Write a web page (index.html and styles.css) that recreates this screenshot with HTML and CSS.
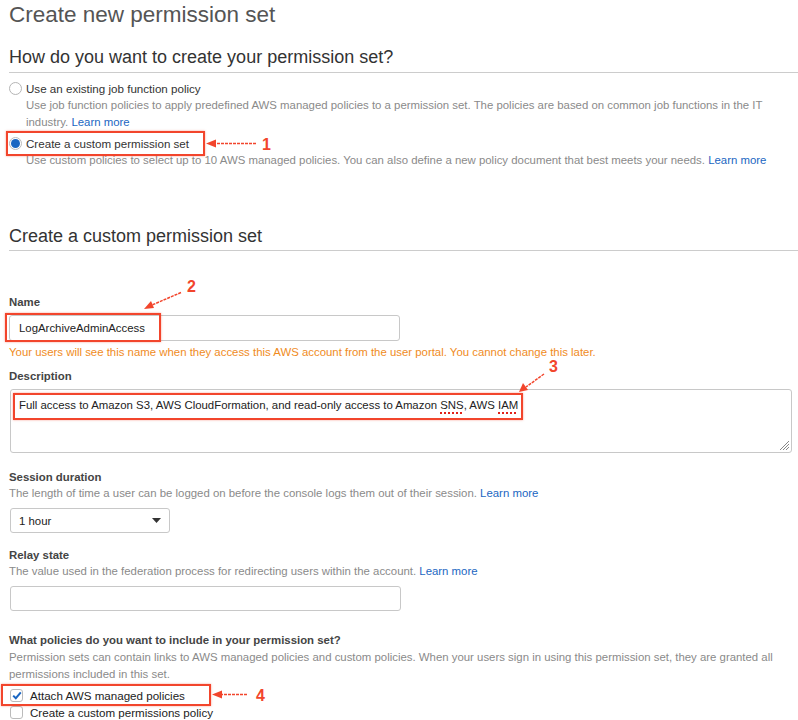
FILE: index.html
```html
<!DOCTYPE html>
<html>
<head>
<meta charset="utf-8">
<link rel="stylesheet" href="styles.css">
</head>
<body>
<div class="page">
  <h1 class="title">Create new permission set</h1>
  <h2 class="section">How do you want to create your permission set?</h2>
  <div class="options">
    <div class="option">
      <div class="opt-row"><span class="radio"></span><span class="opt-label">Use an existing job function policy</span></div>
      <p class="opt-desc">Use job function policies to apply predefined AWS managed policies to a permission set. The policies are based on common job functions in the IT industry. <a class="link">Learn more</a></p>
    </div>
    <div class="option">
      <div class="opt-row"><span class="radio checked"></span><span class="opt-label">Create a custom permission set</span></div>
      <p class="opt-desc">Use custom policies to select up to 10 AWS managed policies. You can also define a new policy document that best meets your needs. <a class="link">Learn more</a></p>
    </div>
  </div>

  <h2 class="section second">Create a custom permission set</h2>

  <div class="field name-field">
    <div class="label">Name</div>
    <div class="input">LogArchiveAdminAccess</div>
    <div class="warn">Your users will see this name when they access this AWS account from the user portal. You cannot change this later.</div>
  </div>

  <div class="field desc-field">
    <div class="label">Description</div>
    <div class="textarea">Full access to Amazon S3, AWS CloudFormation, and read-only access to Amazon <span class="spell">SNS</span>, AWS <span class="spell">IAM</span>
      <svg class="grip" width="12" height="12" viewBox="0 0 12 12"><path d="M11 2L2 11M11 5L5 11M11 8L8 11" stroke="#888" stroke-width="1"/></svg>
    </div>
  </div>

  <div class="field session-field">
    <div class="label">Session duration</div>
    <div class="help">The length of time a user can be logged on before the console logs them out of their session. <a class="link">Learn more</a></div>
    <div class="select"><span>1 hour</span><svg width="9" height="5" viewBox="0 0 9 5"><path d="M0 0H9L4.5 5Z" fill="#333"/></svg></div>
  </div>

  <div class="field relay-field">
    <div class="label">Relay state</div>
    <div class="help">The value used in the federation process for redirecting users within the account. <a class="link">Learn more</a></div>
    <div class="input empty"></div>
  </div>

  <div class="field policies">
    <div class="label">What policies do you want to include in your permission set?</div>
    <div class="help tall">Permission sets can contain links to AWS managed policies and custom policies. When your users sign in using this permission set, they are granted all permissions included in this set.</div>
    <div class="checks">
      <div class="check-row"><span class="checkbox checked"><svg width="10" height="9" viewBox="0 0 10 9"><path d="M1.2 4.6L3.8 7.2L8.8 1.4" stroke="#1a66c2" stroke-width="2" fill="none"/></svg></span><span class="check-label">Attach AWS managed policies</span></div>
      <div class="check-row"><span class="checkbox"></span><span class="check-label">Create a custom permissions policy</span></div>
    </div>
  </div>

  <!-- annotations -->
  <div class="ann-box box1"></div>
  <div class="ann-box box2"></div>
  <div class="ann-box box3"></div>
  <div class="ann-box box4"></div>
  <svg class="ann-svg" width="798" height="720" viewBox="0 0 798 720">
    <g stroke="#f2452c" stroke-width="1.5" fill="none" stroke-dasharray="3 1">
      <path d="M256 143.5H214"/>
      <path d="M181 292.5L152 305"/>
      <path d="M544 374L526 387"/>
      <path d="M247 694.5H220"/>
    </g>
    <g fill="#f2452c">
      <path d="M206 143.5L216 139.5L216 147.5Z"/>
      <path d="M144 309L151 301L154 308Z"/>
      <path d="M519 392L523 383L528 390Z"/>
      <path d="M212 694.5L222 690.5L222 698.5Z"/>
    </g>
    <g fill="#f2452c" font-family="Liberation Sans, Arial, sans-serif" font-weight="bold" font-size="16">
      <text x="262" y="150">1</text>
      <text x="187" y="292">2</text>
      <text x="549" y="372">3</text>
      <text x="256" y="701">4</text>
    </g>
  </svg>
</div>
</body>
</html>
```
FILE: styles.css
```css
html, body {
  margin: 0;
  padding: 0;
  background: #fff;
}
.page {
  position: relative;
  width: 798px;
  height: 720px;
  overflow: hidden;
  padding-left: 9px;
  box-sizing: border-box;
  font-family: "Liberation Sans", Arial, Helvetica, sans-serif;
  font-size: 11.4px;
  color: #333;
}
.title {
  margin: 0;
  font-size: 22.5px;
  line-height: 30px;
  font-weight: normal;
  color: #555;
}
.section {
  margin: 15px 0 0;
  font-size: 18px;
  line-height: 24px;
  padding-bottom: 3px;
  font-weight: normal;
  color: #333;
  border-bottom: 1px solid #ccc;
}
.section.second {
  margin-top: 55px;
  padding-bottom: 2px;
}
.options {
  margin-top: 7px;
  display: flex;
  flex-direction: column;
  gap: 4px;
}
.opt-row {
  display: flex;
  align-items: center;
  height: 17px;
  gap: 4px;
}
.radio {
  width: 11px;
  height: 11px;
  border: 1px solid #b5b5b5;
  border-radius: 50%;
  background: #fff;
}
.radio.checked {
  background: #1a66c2;
  background-clip: content-box;
  width: 9px;
  height: 9px;
  padding: 1px;
  border-color: #bbb;
}
.opt-label {
  font-size: 11.6px;
  color: #333;
}
.opt-desc {
  margin: 0 0 0 17px;
  font-size: 11.4px;
  line-height: 17px;
  color: #8a8a8a;
  width: 745px;
}
.link {
  color: #1a66c2;
}
.name-field {
  margin-top: 43px;
}
.label {
  font-weight: bold;
  font-size: 11.4px;
  line-height: 16px;
  color: #444;
}
.help {
  font-size: 11.4px;
  line-height: 16px;
  color: #8a8a8a;
  width: 780px;
}
.help.tall {
  margin-top: 1px;
  line-height: 17px;
}
.input {
  margin-top: 5px;
  width: 391px;
  height: 26px;
  box-sizing: border-box;
  border: 1px solid #c8c8c8;
  border-radius: 3px;
  padding: 0 9px;
  font-size: 11.4px;
  line-height: 24px;
  color: #222;
}
.warn {
  margin-top: 3px;
  font-size: 11.4px;
  line-height: 16px;
  color: #f08b1d;
}
.desc-field {
  margin-top: 8px;
}
.textarea {
  position: relative;
  margin-top: 5px;
  margin-left: 1px;
  width: 782px;
  height: 64px;
  box-sizing: border-box;
  border: 1px solid #c8c8c8;
  border-radius: 3px;
  padding: 7px 8px;
  font-size: 11.4px;
  line-height: 16px;
  color: #222;
}
.spell {
  text-decoration: underline dotted #e2231a;
  text-decoration-thickness: 2px;
  text-underline-offset: 3px;
}
.grip {
  position: absolute;
  right: 1px;
  bottom: 1px;
}
.session-field {
  margin-top: 16px;
}
.select {
  margin-top: 7px;
  margin-left: 1px;
  width: 160px;
  height: 25px;
  box-sizing: border-box;
  border: 1px solid #c8c8c8;
  border-radius: 3px;
  padding: 0 8px 0 8px;
  display: flex;
  align-items: center;
  justify-content: space-between;
  font-size: 11.4px;
  color: #222;
}
.relay-field {
  margin-top: 14px;
}
.relay-field .input {
  margin-top: 7px;
  margin-left: 1px;
  width: 391px;
  height: 25px;
}
.policies {
  margin-top: 21px;
}
.checks {
  margin-top: 4px;
}
.check-row {
  display: flex;
  align-items: center;
  height: 17px;
  gap: 7px;
  margin-left: 1px;
}
.checkbox {
  width: 11px;
  height: 11px;
  border: 1px solid #bbb;
  border-radius: 3px;
  background: #fff;
  display: flex;
  align-items: center;
  justify-content: center;
}
.check-label {
  font-size: 11.6px;
  color: #222;
}
.ann-box {
  position: absolute;
  border: 2px solid #f2452c;
  box-shadow: 0 0 2px rgba(242, 69, 44, 0.5);
  box-sizing: border-box;
}
.box1 { left: 6px; top: 131px; width: 199px; height: 25px; }
.box2 { left: 5px; top: 313px; width: 156px; height: 29px; }
.box3 { left: 13px; top: 393px; width: 510px; height: 27px; }
.box4 { left: 1px; top: 684px; width: 210px; height: 22px; }
.ann-svg {
  position: absolute;
  left: 0;
  top: 0;
  pointer-events: none;
}
```
